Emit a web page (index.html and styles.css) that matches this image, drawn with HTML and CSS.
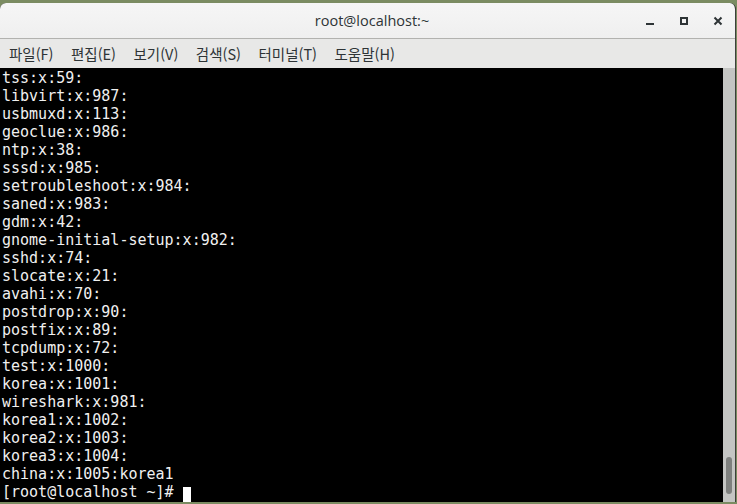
FILE: index.html
```html
<!DOCTYPE html>
<html lang="ko">
<head>
  <meta charset="UTF-8">
  <meta name="viewport" content="width=device-width, initial-scale=1.0">
  <title>root@localhost:~</title>
  <link rel="stylesheet" href="styles.css">
</head>
<body>
  <div class="window">
    <!-- Barra de titulo -->
    <header class="titlebar">
      <span></span>
      <span class="title">root@localhost:~</span>
      <div class="controls">
        <button class="ctl" aria-label="minimize">
          <svg width="10" height="10" viewBox="0 0 10 10"><rect x="1" y="7" width="8" height="2" fill="#2e3436"/></svg>
        </button>
        <button class="ctl" aria-label="maximize">
          <svg width="10" height="10" viewBox="0 0 10 10"><rect x="2" y="2" width="6" height="6" fill="none" stroke="#2e3436" stroke-width="2"/></svg>
        </button>
        <button class="ctl" aria-label="close">
          <svg width="10" height="10" viewBox="0 0 10 10"><path d="M1.5 1.5 L8.5 8.5 M8.5 1.5 L1.5 8.5" stroke="#2e3436" stroke-width="2"/></svg>
        </button>
      </div>
    </header>

    <!-- Menu -->
    <nav class="menubar">
      <span>파일(F)</span>
      <span>편집(E)</span>
      <span>보기(V)</span>
      <span>검색(S)</span>
      <span>터미널(T)</span>
      <span>도움말(H)</span>
    </nav>

    <!-- Terminal -->
    <div class="terminal">
      <pre class="output">tss:x:59:
libvirt:x:987:
usbmuxd:x:113:
geoclue:x:986:
ntp:x:38:
sssd:x:985:
setroubleshoot:x:984:
saned:x:983:
gdm:x:42:
gnome-initial-setup:x:982:
sshd:x:74:
slocate:x:21:
avahi:x:70:
postdrop:x:90:
postfix:x:89:
tcpdump:x:72:
test:x:1000:
korea:x:1001:
wireshark:x:981:
korea1:x:1002:
korea2:x:1003:
korea3:x:1004:
china:x:1005:korea1
[root@localhost ~]# <span class="cursor"> </span></pre>
      <div class="scrollbar"><div class="thumb"></div></div>
    </div>
  </div>
</body>
</html>
```

FILE: styles.css
```css
body {
  margin: 0;
  padding: 0;
  background: #7b8c62; /* escritorio */
  width: 737px;
  height: 504px;
  overflow: hidden;
}
.window {
  margin-top: 3px;
  width: 735px;
  height: 499px;
  display: flex;
  flex-direction: column;
  border-radius: 6px 6px 0 0;
  border-right: 1px solid #3c3f3a;
  overflow: hidden;
  background: #000;
}
.titlebar {
  height: 35px;
  flex: none;
  display: grid;
  grid-template-columns: 1fr auto 1fr;
  align-items: center;
  background: linear-gradient(#f6f6f6, #efefef);
  border-bottom: 1px solid #b2b2af;
  font-family: "Open Sans", "Noto Sans", sans-serif;
}
.title {
  font-size: 14.5px;
  color: #2e3436;
  padding-left: 9px;
}
.controls {
  justify-self: end;
  display: flex;
}
.ctl {
  width: 34px;
  height: 34px;
  border: none;
  background: none;
  padding: 0;
  display: flex;
  align-items: center;
  justify-content: center;
}
.menubar {
  height: 29px;
  flex: none;
  display: flex;
  align-items: center;
  gap: 17.5px;
  padding-left: 9px;
  background: #e8e8e7;
  font-family: "Noto Sans CJK KR", sans-serif;
  font-size: 14.5px;
  color: #2e3436;
}
.terminal {
  flex: 1;
  display: flex;
  min-height: 0;
}
.output {
  flex: 1;
  margin: 0;
  padding: 1px 0 0 2px;
  font-family: "DejaVu Sans Mono", monospace;
  font-size: 15px;
  line-height: 18px;
  color: #f0f0f0;
  overflow: hidden;
}
.cursor {
  display: inline-block;
  width: 8px;
  height: 17px;
  vertical-align: -4px;
  background: #fff;
}
.scrollbar {
  width: 12px;
  flex: none;
  background: #c4c5c3;
  display: flex;
  flex-direction: column;
  justify-content: flex-end;
  align-items: center;
  padding-bottom: 8px;
  box-sizing: border-box;
}
.thumb {
  width: 6px;
  height: 37px;
  border-radius: 3px;
  background: #7e807e;
}
```
